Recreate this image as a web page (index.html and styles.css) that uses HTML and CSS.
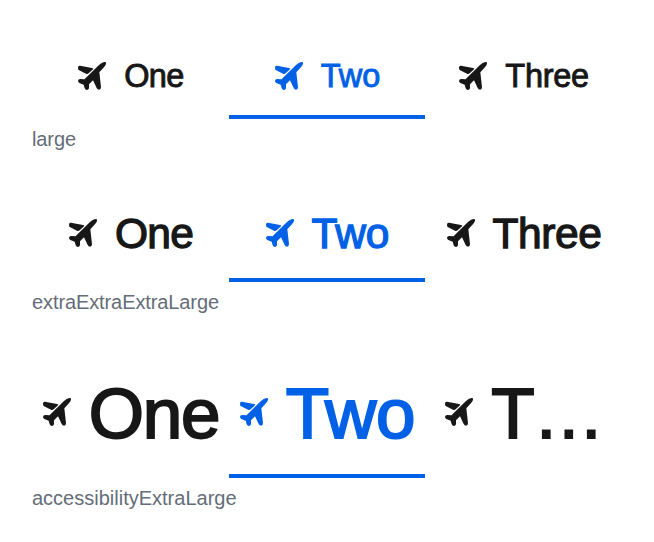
FILE: index.html
```html
<!DOCTYPE html>
<html lang="en">
<head>
<meta charset="utf-8">
<title>Tabs</title>
<link rel="stylesheet" href="styles.css">
</head>
<body>
<svg class="defs" aria-hidden="true">
  <symbol id="plane" viewBox="0 0 84 84">
    <path d="M0 17Q0 10 6 11L42 18Q48 19 45 22L32 34Q28 37 24 35L2 24Q0 22 0 17Z"/>
    <path d="M71 3Q77 0 81 0Q85 0 84 5Q83 10 79 14L64 31L69 75Q69 81 64 83Q58 83 56 78L45 55L33 67L33 79Q31 84 27 84Q22 84 20 79L17 68L4 63Q0 60 0 56Q1 51 6 51L20 52L24 47L63 9Z"/>
  </symbol>
</svg>
<main class="page">
  <section class="sample large">
    <nav class="tabs">
      <a class="tab one"><svg class="icon"><use href="#plane"/></svg><span class="label">One</span></a>
      <a class="tab two active"><svg class="icon"><use href="#plane"/></svg><span class="label">Two</span></a>
      <a class="tab three"><svg class="icon"><use href="#plane"/></svg><span class="label">Three</span></a>
    </nav>
    <p class="caption">large</p>
  </section>
  <section class="sample xxxl">
    <nav class="tabs">
      <a class="tab one"><svg class="icon"><use href="#plane"/></svg><span class="label">One</span></a>
      <a class="tab two active"><svg class="icon"><use href="#plane"/></svg><span class="label">Two</span></a>
      <a class="tab three"><svg class="icon"><use href="#plane"/></svg><span class="label">Three</span></a>
    </nav>
    <p class="caption">extraExtraExtraLarge</p>
  </section>
  <section class="sample ax">
    <nav class="tabs">
      <a class="tab one"><svg class="icon"><use href="#plane"/></svg><span class="label">One</span></a>
      <a class="tab two active"><svg class="icon"><use href="#plane"/></svg><span class="label">Two</span></a>
      <a class="tab three"><svg class="icon"><use href="#plane"/></svg><span class="label">T…</span></a>
    </nav>
    <p class="caption">accessibilityExtraLarge</p>
  </section>
</main>
</body>
</html>
```
FILE: styles.css
```css
* { box-sizing: border-box; }
body {
  margin: 0;
  background: #fff;
  color: #171717;
  font-family: "Liberation Sans", Arial, sans-serif;
}
.defs { display: none; }
.page { padding: 32px 32px 0; }
.tabs {
  display: grid;
  grid-template-columns: 197px 196px 197px;
  height: 87px;
}
.tab {
  display: flex;
  align-items: center;
  justify-content: center;
  gap: 18px;
  padding: 4px 0 0 1px;
  border-bottom: 4px solid transparent;
  min-width: 0;
}
.active { color: #0061e6; border-bottom-color: #0061e6; }
.icon { width: 28px; height: 28px; flex: none; fill: currentColor; }
.label {
  padding-top: 2px;
  font-size: 32.5px;
  line-height: 1;
  white-space: nowrap;
  -webkit-text-stroke: 0.9px currentColor;
}
.one .label { letter-spacing: -0.018em; }
.three .label { letter-spacing: -0.01em; }
.caption {
  margin: 0;
  height: 65px;
  padding-top: 8px;
  font-size: 20px;
  line-height: 24px;
  letter-spacing: -0.1px;
  color: #646d78;
}
.xxxl .tabs { height: 98px; }
.xxxl .caption { height: 64px; }
.xxxl .label { font-size: 42.5px; -webkit-text-stroke-width: 1.3px; }
.ax .tabs { height: 132px; }
.ax .label { font-size: 71px; -webkit-text-stroke-width: 2px; }
.ax .two .label { letter-spacing: -0.3px; }
.ax .three .label { letter-spacing: -1.5px; }
.ax .caption { letter-spacing: 0; }
```
